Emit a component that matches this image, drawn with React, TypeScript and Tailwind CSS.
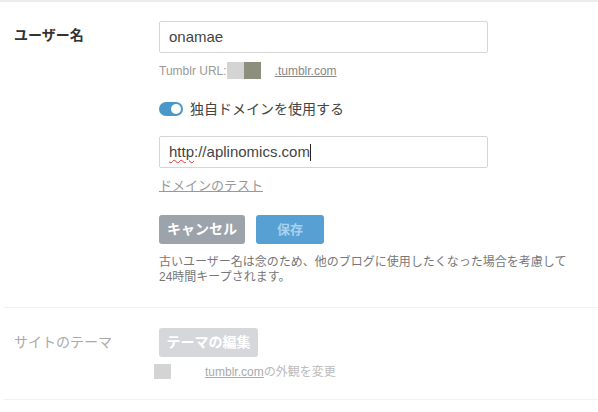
export default function App() {
  return (
    <div
      className="w-[598px] h-[412px] bg-white border-t-2 border-[#ececec] text-[#444]"
      style={{ fontFamily: '"Liberation Sans", "Noto Sans CJK JP", sans-serif' }}
    >
      {/* Username */}
      <section className="ml-1 flex pt-[19px] pb-[22px] border-b border-[#f0f0f0]">
        <div className="w-[155px] pl-[10px] pt-[1px] text-[14px] font-bold text-[#333] leading-[26px]">
          ユーザー名
        </div>
        <div className="flex-1">
          <div className="w-[329px] h-[32px] border border-[#d6d6d6] rounded-[2px] flex items-center px-[9px] text-[15px] text-[#444]">
            onamae
          </div>

          <div className="mt-[9px] flex items-center h-[17px] text-[12px] text-[#999]">
            <span>Tumblr URL:</span>
            <span className="w-[17px] h-[17px] bg-[#d4d4d4]"></span>
            <span className="w-[17px] h-[17px] bg-[#8c8f7c]"></span>
            <span className="ml-[14px] underline text-[#888]">.tumblr.com</span>
          </div>

          <div className="mt-[20px] flex items-center h-[20px] gap-[7px]">
            <div className="w-[24px] h-[14px] rounded-full bg-[#4a98c9] flex items-center justify-end pr-[2px]">
              <div className="w-[10px] h-[10px] rounded-full bg-white"></div>
            </div>
            <span className="text-[14px] text-[#444]">独自ドメインを使用する</span>
          </div>

          <div className="mt-[17px] w-[329px] h-[32px] border border-[#d6d6d6] rounded-[2px] flex items-center px-[9px] text-[15px] text-[#444]">
            <span className="underline decoration-wavy decoration-[#e03030] decoration-1 underline-offset-2">http</span>
            <span>://aplinomics.com</span>
            <span className="w-px h-[17px] bg-[#222]"></span>
          </div>

          <div className="mt-[10px] h-[16px] text-[13px] text-[#999] underline leading-[16px]">
            ドメインのテスト
          </div>

          <div className="mt-[21px] flex gap-[11px]">
            <button className="w-[86px] h-[29px] rounded-[3px] bg-[#9da3aa] text-white font-bold text-[14px]">
              キャンセル
            </button>
            <button className="w-[68px] h-[29px] rounded-[3px] bg-[#57a0d4] text-[#a9d1ee] font-bold text-[13px]">
              保存
            </button>
          </div>

          <p className="mt-[11px] text-[12px] leading-[15px] text-[#777]">
            古いユーザー名は念のため、他のブログに使用したくなった場合を考慮して
            <br />
            24時間キープされます。
          </p>
        </div>
      </section>

      {/* Theme */}
      <section className="ml-1 flex pt-[20px] pb-[20px] border-b border-[#f2f2f2]">
        <div className="w-[155px] pl-[10px] text-[14px] text-[#aaa] leading-[29px]">
          サイトのテーマ
        </div>
        <div className="flex-1">
          <button className="w-[99px] h-[29px] rounded-[3px] bg-[#d5d7db] text-white font-bold text-[14px]">
            テーマの編集
          </button>
          <div className="mt-[7px] flex items-center h-[15px] -ml-[5px]">
            <span className="w-[17px] h-[15px] bg-[#d4d4d4]"></span>
            <span className="ml-[34px] text-[12px] text-[#bbb]">
              <span className="underline text-[#aaa]">tumblr.com</span>の外観を変更
            </span>
          </div>
        </div>
      </section>
    </div>
  );
}
